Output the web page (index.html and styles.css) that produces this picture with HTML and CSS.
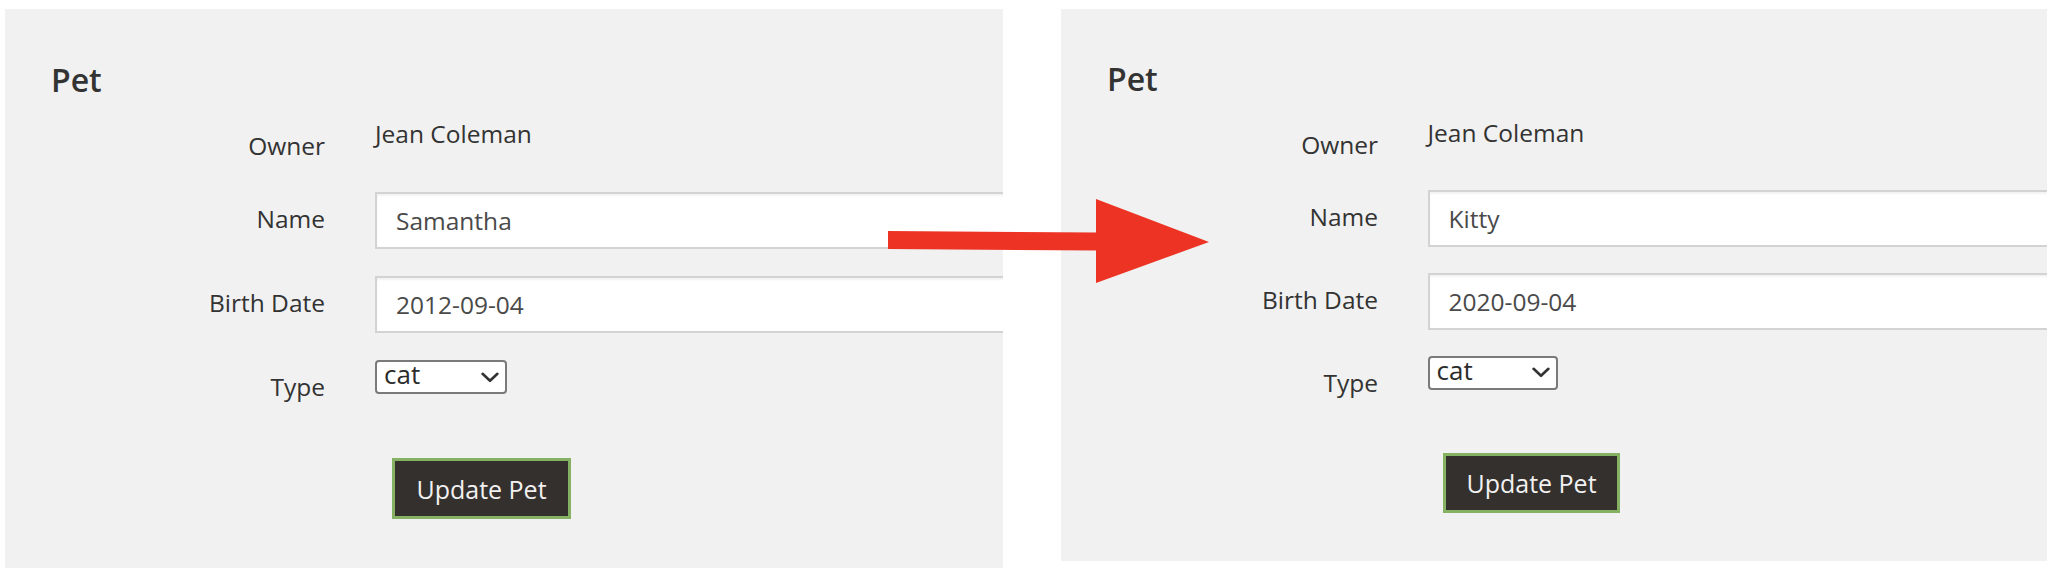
FILE: index.html
```html
<!DOCTYPE html>
<html lang="en">
<head>
<meta charset="utf-8">
<title>Pet update – before and after</title>
<link rel="stylesheet" href="styles.css">
</head>
<body>
<main class="compare">
  <section class="panel panel--before">
    <h2 class="panel-title">Pet</h2>
    <form class="pet-form">
      <div class="form-row form-row--static">
        <span class="form-label">Owner</span>
        <span class="form-static">Jean Coleman</span>
      </div>
      <div class="form-row">
        <label class="form-label" for="name-a">Name</label>
        <input class="form-input" id="name-a" type="text" value="Samantha">
      </div>
      <div class="form-row">
        <label class="form-label" for="birth-a">Birth Date</label>
        <input class="form-input" id="birth-a" type="text" value="2012-09-04">
      </div>
      <div class="form-row">
        <span class="form-label">Type</span>
        <div class="form-select">
          <span class="form-select-value">cat</span>
          <svg class="form-select-chevron" width="18" height="11" viewBox="0 0 18 11" aria-hidden="true"><polyline points="1.6,1.8 9,8.8 16.4,1.8"/></svg>
        </div>
      </div>
      <div class="form-actions">
        <button class="btn" type="button">Update Pet</button>
      </div>
    </form>
  </section>

  <svg class="arrow" width="321" height="84" viewBox="0 0 321 84" aria-hidden="true">
    <polygon points="0,32 209,33.6 209,51.6 0,50"/>
    <polygon points="208,0 321,43 208,84"/>
  </svg>

  <section class="panel panel--after">
    <h2 class="panel-title">Pet</h2>
    <form class="pet-form">
      <div class="form-row form-row--static">
        <span class="form-label">Owner</span>
        <span class="form-static">Jean Coleman</span>
      </div>
      <div class="form-row">
        <label class="form-label" for="name-b">Name</label>
        <input class="form-input" id="name-b" type="text" value="Kitty">
      </div>
      <div class="form-row">
        <label class="form-label" for="birth-b">Birth Date</label>
        <input class="form-input" id="birth-b" type="text" value="2020-09-04">
      </div>
      <div class="form-row">
        <span class="form-label">Type</span>
        <div class="form-select">
          <span class="form-select-value">cat</span>
          <svg class="form-select-chevron" width="18" height="11" viewBox="0 0 18 11" aria-hidden="true"><polyline points="1.6,1.8 9,8.8 16.4,1.8"/></svg>
        </div>
      </div>
      <div class="form-actions">
        <button class="btn" type="button">Update Pet</button>
      </div>
    </form>
  </section>
</main>
</body>
</html>
```
FILE: styles.css
```css
html, body {
  margin: 0;
  padding: 0;
  background: #ffffff;
}

body {
  width: 2062px;
  height: 578px;
  overflow: hidden;
  font-family: "Open Sans", "Noto Sans", sans-serif;
  color: #333333;
}

.compare {
  position: relative;
  display: flex;
  align-items: flex-start;
  gap: 58px;
  padding: 9px 0 0 5px;
}

.panel {
  flex: none;
  box-sizing: border-box;
  background: #f1f1f1;
  overflow: hidden;
  padding: var(--pad-top) 0 0 46px;
}

.panel--before {
  width: 998px;
  height: 559px;
  --pad-top: 50.5px;
  --form-top: 19.5px;
  --row-gap: 27px;
  --field-h: 57px;
  --select-h: 34px;
  --select-w: 132px;
  --label-w: 274px;
  --col-gap: 50px;
  --btn-gap: 27px;
  --btn-offset: 17px;
  --btn-w: 179px;
  --btn-h: 61px;
}

.panel--after {
  width: 986px;
  height: 552px;
  --pad-top: 49.5px;
  --form-top: 19px;
  --row-gap: 26.5px;
  --field-h: 56.5px;
  --select-h: 33.5px;
  --select-w: 130px;
  --label-w: 271px;
  --col-gap: 49.5px;
  --btn-gap: 26.5px;
  --btn-offset: 15.5px;
  --btn-w: 177px;
  --btn-h: 60px;
}

.panel-title {
  margin: 0;
  font-size: 32px;
  font-weight: 600;
  line-height: 40px;
  color: #333333;
}

.pet-form {
  margin: var(--form-top) 0 0 0;
  display: flex;
  flex-direction: column;
  gap: var(--row-gap);
}

.form-row {
  display: grid;
  grid-template-columns: var(--label-w) minmax(0, 1fr);
  column-gap: var(--col-gap);
  align-items: start;
}

.form-row--static {
  min-height: 46px;
}

.form-label {
  text-align: right;
  font-size: 24.5px;
  line-height: 34px;
  padding-top: 10px;
  color: #333333;
}

.form-static {
  font-size: 24.5px;
  line-height: 29px;
  color: #333333;
}

.form-input {
  box-sizing: border-box;
  width: 900px;
  height: var(--field-h);
  margin: 0;
  padding: 0 0 0 19px;
  border: 2px solid #d3d3d3;
  border-radius: 0;
  background: #ffffff;
  box-shadow: inset 0 2px 2px rgba(0, 0, 0, 0.05);
  font-family: inherit;
  font-size: 24.5px;
  color: #4a4a4a;
  outline: none;
}

.form-select {
  box-sizing: border-box;
  width: var(--select-w);
  height: var(--select-h);
  display: flex;
  align-items: center;
  justify-content: space-between;
  padding: 0 6px 0 7px;
  background: #ffffff;
  border: 2px solid #7a7a7a;
  border-radius: 4px;
}

.form-select-value {
  font-size: 26px;
  line-height: 30px;
  margin-bottom: 6px;
  color: #2b2b2b;
}

.form-select-chevron {
  display: block;
  flex: none;
}

.form-select-chevron polyline {
  fill: none;
  stroke: #333333;
  stroke-width: 2.6;
  stroke-linecap: round;
  stroke-linejoin: round;
}

.form-actions {
  margin-top: var(--btn-gap);
  padding-left: calc(var(--label-w) + var(--col-gap) + var(--btn-offset));
}

.btn {
  box-sizing: border-box;
  display: block;
  width: var(--btn-w);
  height: var(--btn-h);
  margin: 0;
  padding: 0;
  background: #34302d;
  border: 3px solid #84b262;
  border-radius: 0;
  color: #f1f1f1;
  font-family: inherit;
  font-size: 25px;
  cursor: pointer;
}

.arrow {
  position: absolute;
  left: 888px;
  top: 199px;
  display: block;
}

.arrow polygon {
  fill: #ec3324;
}
```
